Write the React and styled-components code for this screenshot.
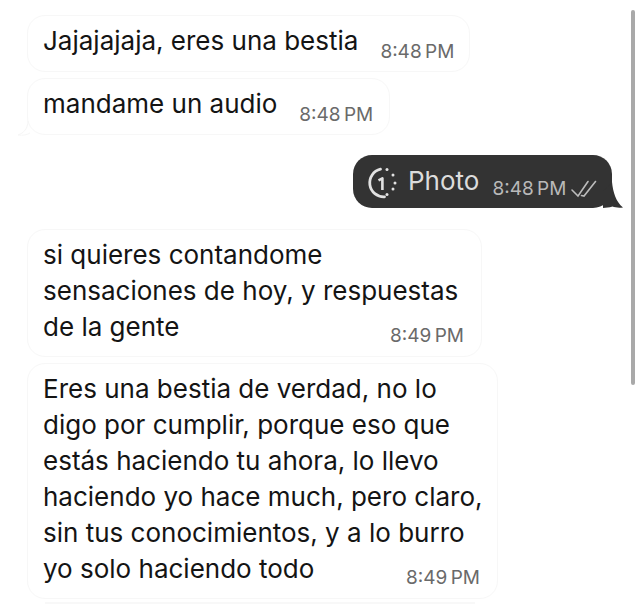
import React from 'react';
import styled, { createGlobalStyle } from 'styled-components';

const GlobalStyle = createGlobalStyle`
  html, body {
    margin: 0;
    padding: 0;
    height: 100%;
    background: #fff;
    overflow: hidden;
  }
`;

const Screen = styled.div`
  position: relative;
  width: 640px;
  height: 604px;
  overflow: hidden;
  background: #fff;
  font-family: Inter, 'Liberation Sans', sans-serif;
`;

const Thread = styled.div`
  display: flex;
  flex-direction: column;
  padding: 15px 0 0 27px;
`;

const Bubble = styled.div`
  position: relative;
  box-sizing: border-box;
  align-self: flex-start;
  width: ${props => props.$width}px;
  height: ${props => props.$height}px;
  margin-top: ${props => props.$top || 0}px;
  padding: 7px 17px 0 15px;
  background: #fff;
  border: 1px solid #f7f7f7;
  border-radius: 18px;
  color: #141414;
  font-size: 26px;
  line-height: 36px;
`;

const Line = styled.div`
  white-space: nowrap;
`;

const LastLine = styled.div`
  display: flex;
  justify-content: space-between;
  white-space: nowrap;
`;

const Time = styled.span`
  color: ${props => props.$light ? '#b9b9b9' : '#6a6a6a'};
  font-size: 19px;
  line-height: 24px;
  padding-top: ${props => props.$drop || 0}px;
  word-spacing: -2px;
  white-space: nowrap;
`;

const SingleLine = styled.div`
  display: flex;
  gap: 22px;
  white-space: nowrap;
`;

const LeftTail = styled.svg`
  position: absolute;
  left: -11px;
  bottom: -2px;
`;

const OutRow = styled.div`
  display: flex;
  justify-content: flex-end;
  padding-right: 28px;
  margin-top: 20px;
  margin-bottom: 21px;
`;

const DarkBubble = styled.div`
  position: relative;
  box-sizing: border-box;
  display: flex;
  align-items: flex-start;
  width: 259px;
  height: 53px;
  padding: 8px 0 0 13px;
  background: #333333;
  border-radius: 19px;
  color: #dcdcdc;
  font-size: 26px;
  line-height: 36px;
`;

const Caption = styled.span`
  margin-left: 10px;
`;

const Meta = styled.div`
  display: flex;
  align-items: center;
  gap: 4px;
  margin-left: 13px;
  margin-top: 14px;
`;

const DarkTail = styled.svg`
  position: absolute;
  right: -11px;
  bottom: 0;
`;

const ScrollThumb = styled.div`
  position: absolute;
  left: 631px;
  top: 10px;
  width: 4px;
  height: 375px;
  background: #a9a9a9;
  border-radius: 2px;
`;

const NextBubbleEdge = styled.div`
  position: absolute;
  left: 45px;
  top: 602px;
  width: 430px;
  height: 2px;
  background: #f8f8f8;
`;

const TimerMark = styled.svg`
  flex: none;
  margin-top: 4px;
`;

const TimerIcon = () => (
  <TimerMark width="32" height="32" viewBox="0 0 32 32" fill="none" stroke="#e2e2e2">
    <path d="M14.5 2.2A14 14 0 0 0 18.5 29.8" strokeWidth="2.8" strokeLinecap="round" />
    <path d="M12.5 13.4L16.4 11.4V23" strokeWidth="2.6" strokeLinejoin="round" />
    <circle cx="21" cy="2.6" r="1.5" fill="#e2e2e2" stroke="none" />
    <circle cx="27" cy="8" r="1.5" fill="#e2e2e2" stroke="none" />
    <circle cx="29" cy="16" r="1.5" fill="#e2e2e2" stroke="none" />
    <circle cx="27" cy="22" r="1.5" fill="#e2e2e2" stroke="none" />
    <circle cx="21" cy="27.4" r="1.5" fill="#e2e2e2" stroke="none" />
  </TimerMark>
);

const DoubleCheck = () => (
  <svg width="27" height="18" viewBox="0 0 27 18" fill="none" stroke="#bcbcbc" strokeWidth="1.6" strokeLinecap="round">
    <path d="M2 10L8 16L18 1.5" />
    <path d="M11.5 15.5L14 16L25.5 1.5" />
  </svg>
);

export default function App() {
  return (
    <Screen>
      <GlobalStyle />
      <Thread>
        <Bubble $width={443} $height={57}>
          <SingleLine>
            Jajajajaja, eres una bestia
            <Time $drop={17}>8:48 PM</Time>
          </SingleLine>
        </Bubble>
        <Bubble $width={363} $height={57} $top={6}>
          <SingleLine>
            mandame un audio
            <Time $drop={17}>8:48 PM</Time>
          </SingleLine>
          <LeftTail width="14" height="16" viewBox="0 0 14 16" fill="none" stroke="#f6f6f6">
            <path d="M11 1C11 8 7 13 1 15C6 15.5 10 15 13 13" />
          </LeftTail>
        </Bubble>
        <OutRow>
          <DarkBubble>
            <TimerIcon />
            <Caption>Photo</Caption>
            <Meta>
              <Time $light>8:48 PM</Time>
              <DoubleCheck />
            </Meta>
            <DarkTail width="20" height="26" viewBox="0 0 20 26">
              <path d="M9 0C10 10 13 20 20 25.5C16 26.2 12 25.6 9.5 24.6C6 25.6 3 26 0 26L0 10Z" fill="#333333" />
            </DarkTail>
          </DarkBubble>
        </OutRow>
        <Bubble $width={455} $height={128}>
          <Line>si quieres contandome</Line>
          <Line>sensaciones de hoy, y respuestas</Line>
          <LastLine>
            de la gente
            <Time $drop={15}>8:49 PM</Time>
          </LastLine>
        </Bubble>
        <Bubble $width={471} $height={236} $top={6}>
          <Line>Eres una bestia de verdad, no lo</Line>
          <Line>digo por cumplir, porque eso que</Line>
          <Line>estás haciendo tu ahora, lo llevo</Line>
          <Line>haciendo yo hace much, pero claro,</Line>
          <Line>sin tus conocimientos, y a lo burro</Line>
          <LastLine>
            yo solo haciendo todo
            <Time $drop={15}>8:49 PM</Time>
          </LastLine>
        </Bubble>
      </Thread>
      <NextBubbleEdge />
      <ScrollThumb />
    </Screen>
  );
}
